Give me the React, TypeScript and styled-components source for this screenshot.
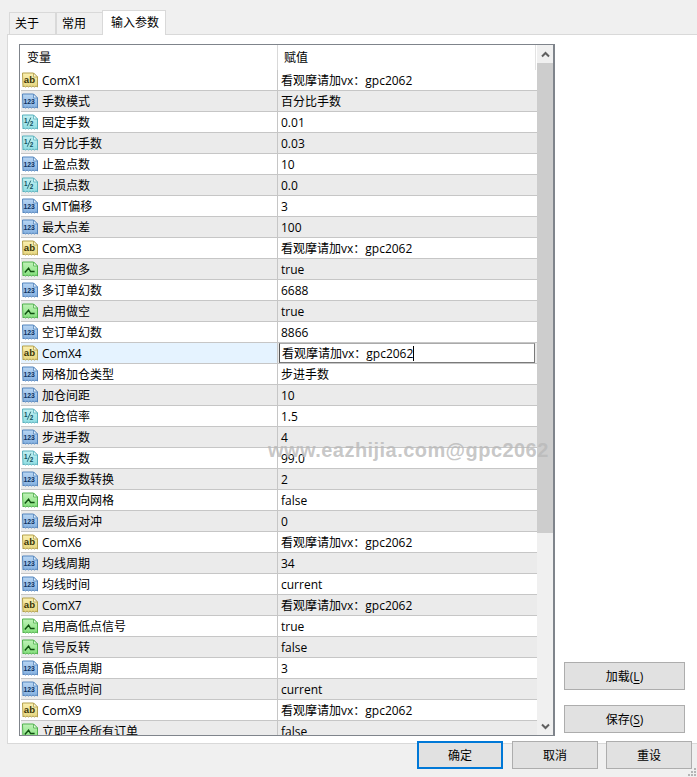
import React from "react";
import styled, { createGlobalStyle } from "styled-components";

const Global = createGlobalStyle`
  html, body { margin: 0; padding: 0; background: #f0f0f0; }
  #root { width: 697px; height: 777px; overflow: hidden; }
`;

const FONT = `"Open Sans", "Noto Sans CJK SC", sans-serif`;

const Dialog = styled.div`
  width: 697px;
  height: 777px;
  padding-top: 10px;
  box-sizing: border-box;
  display: flex;
  flex-direction: column;
  font-family: ${FONT};
  font-size: 12px;
  color: #000;
  background: #f0f0f0;
`;

const TabBar = styled.div`
  display: flex;
  align-items: flex-end;
  height: 25px;
  padding-left: 9px;
  position: relative;
  z-index: 1;
  margin-bottom: -1px;
`;

const Tab = styled.div<{ $active?: boolean; $w: number }>`
  width: ${(p) => p.$w}px;
  height: ${(p) => (p.$active ? 25 : 23)}px;
  box-sizing: border-box;
  background: ${(p) => (p.$active ? "#fff" : "#f0f0f0")};
  border: 1px solid #d9d9d9;
  border-bottom: ${(p) => (p.$active ? "none" : "1px solid #d9d9d9")};
  margin-left: ${(p) => (p.$active ? "-1px" : "0")};
  display: flex;
  align-items: center;
  padding-left: ${(p) => (p.$active ? 8 : 5)}px;
  padding-bottom: ${(p) => (p.$active ? 3 : 2)}px;
  white-space: nowrap;
`;

const Panel = styled.div`
  margin-left: 7px;
  width: 690px;
  height: 710px;
  box-sizing: border-box;
  background: #fff;
  border: 1px solid #d9d9d9;
  border-right: none;
  padding: 9px 0 0 11px;
  display: flex;
  gap: 9px;
`;

const List = styled.div`
  width: 536px;
  height: 692px;
  box-sizing: border-box;
  border: 1px solid #7f848b;
  border-right-width: 2px;
  display: flex;
  position: relative;
  overflow: hidden;
`;

const Table = styled.div`
  width: 516px;
  flex: none;
  overflow: hidden;
  padding-left: 1px;
`;

const HeaderRow = styled.div`
  display: grid;
  grid-template-columns: 256px 1fr;
  height: 25px;
  background: #fff;
  border-right: 1px solid #e3e3e3;
  margin-right: 1px;
`;

const HeaderCell = styled.div<{ $divider?: boolean }>`
  display: flex;
  align-items: center;
  padding-bottom: 2px;
  padding-left: 6px;
  border-left: ${(p) => (p.$divider ? "1px solid #d9d9d9" : "none")};
`;

const Row = styled.div<{ $alt: boolean }>`
  display: grid;
  grid-template-columns: 256px 1fr;
  height: 21px;
  box-sizing: border-box;
  border-bottom: 1px solid #c6c6c6;
  background: ${(p) => (p.$alt ? "#ebebeb" : "#fff")};
`;

const NameCell = styled.div<{ $selected?: boolean }>`
  display: flex;
  align-items: center;
  gap: 4px;
  padding-left: 1px;
  background: ${(p) => (p.$selected ? "#e5f3ff" : "transparent")};
  white-space: nowrap;
`;

const ValueCell = styled.div`
  display: flex;
  align-items: center;
  padding-left: 3px;
  border-left: 1px solid #c6c6c6;
  white-space: nowrap;
  position: relative;
`;

const Editor = styled.div`
  position: absolute;
  left: 1px;
  right: 2px;
  top: 0;
  height: 20px;
  box-sizing: border-box;
  background: #fff;
  border: 1px solid #7a7a7a;
  border-top-color: #aaa;
  border-left-color: #555;
  display: flex;
  align-items: center;
  padding-left: 2px;
`;

const Caret = styled.span`
  display: inline-block;
  width: 1px;
  height: 15px;
  background: #000;
`;

const Scrollbar = styled.div`
  flex: none;
  width: 16px;
  background: #f0f0f0;
  display: flex;
  flex-direction: column;
  align-items: stretch;
`;

const ScrollButton = styled.div<{ $h: number }>`
  height: ${(p) => p.$h}px;
  display: flex;
  align-items: center;
  justify-content: center;
  flex: none;
`;

const Thumb = styled.div`
  height: 470px;
  background: #cdcdcd;
  flex: none;
`;

const Track = styled.div`
  flex: 1;
`;

const Watermark = styled.div`
  position: absolute;
  left: 248px;
  top: 394px;
  white-space: nowrap;
  font-family: "Liberation Sans", sans-serif;
  font-weight: 700;
  font-size: 20px;
  letter-spacing: 0.45px;
  color: rgba(185, 185, 185, 0.8);
  pointer-events: none;
`;

const SideButtons = styled.div`
  display: flex;
  flex-direction: column;
  justify-content: flex-end;
  gap: 15px;
  height: 689px;
  width: 122px;
`;

const Button = styled.button<{ $w: number; $h: number; $primary?: boolean }>`
  width: ${(p) => p.$w}px;
  height: ${(p) => p.$h}px;
  box-sizing: border-box;
  background: #e1e1e1;
  border: ${(p) => (p.$primary ? "2px solid #0078d7" : "1px solid #adadad")};
  margin-right: ${(p) => (p.$primary ? 1 : 0)}px;
  font-family: ${FONT};
  font-size: 12px;
  color: #000;
  padding: 0;
  cursor: default;
  u { text-underline-offset: 2px; }
`;

const Footer = styled.div`
  display: flex;
  justify-content: flex-end;
  gap: 8px;
  padding: 0 5px 0 0;
  margin-top: -3px;
  position: relative;
`;

const Grip = styled.svg`
  position: absolute;
  right: 0;
  bottom: -8px;
`;

type Kind = "ab" | "123" | "half" | "bool";

const PAL: Record<Kind, { top: string; bottom: string; fold: string; stroke: string; text: string }> = {
  ab: { top: "#fbf0b0", bottom: "#e6d680", fold: "#fdf9dc", stroke: "#b3a04c", text: "#3a3508" },
  "123": { top: "#b9d6f3", bottom: "#84b0e0", fold: "#e2eefa", stroke: "#5485bd", text: "#0d3260" },
  half: { top: "#c2f0f2", bottom: "#8fdde2", fold: "#e4f9fa", stroke: "#58b0bc", text: "#134e5c" },
  bool: { top: "#c0f2b8", bottom: "#84e07c", fold: "#e4fae0", stroke: "#4fb04c", text: "#0f500f" },
};

const IconText = styled.text`
  font-family: "Liberation Sans", sans-serif;
  font-weight: 700;
`;

function TypeIcon({ kind }: { kind: Kind }) {
  const c = PAL[kind];
  const id = `tag-${kind}`;
  return (
    <svg width="16" height="16" viewBox="0 0 16 16" style={{ flex: "none" }}>
      <defs>
        <linearGradient id={id} x1="0" y1="0" x2="0" y2="1">
          <stop offset="0" stopColor={c.top} />
          <stop offset="1" stopColor={c.bottom} />
        </linearGradient>
      </defs>
      <path
        d="M.5 1h11l4 4v10l-1.5-1-1.5 1-1.5-1-1.5 1-1.5-1-1.5 1-1.5-1-1.5 1-1.5-1-1 1z"
        fill={`url(#${id})`}
        stroke={c.stroke}
        strokeWidth="1"
      />
      <path d="M11.5 1v4h4z" fill={c.fold} stroke={c.stroke} strokeWidth="0.8" />
      {kind === "ab" && (
        <IconText x="1.8" y="11.4" fontSize="9.6" fill={c.text}>ab</IconText>
      )}
      {kind === "123" && (
        <IconText x="1.4" y="11" fontSize="6.8" fill={c.text}>123</IconText>
      )}
      {kind === "half" && (
        <>
          <IconText x="2" y="8.8" fontSize="6.4" fill={c.text}>1</IconText>
          <path d="M8.8 3.6 5.2 11.8" stroke={c.text} strokeWidth="0.8" />
          <IconText x="7.8" y="11.8" fontSize="6.4" fill={c.text}>2</IconText>
        </>
      )}
      {kind === "bool" && (
        <path d="M2.8 11.5 6.6 7.2 8.6 10.5h4" fill="none" stroke={c.text} strokeWidth="1.4" />
      )}
    </svg>
  );
}

const V = "看观摩请加vx：gpc2062";

const ROWS: [Kind, string, string][] = [
  ["ab", "ComX1", V],
  ["123", "手数模式", "百分比手数"],
  ["half", "固定手数", "0.01"],
  ["half", "百分比手数", "0.03"],
  ["123", "止盈点数", "10"],
  ["half", "止损点数", "0.0"],
  ["123", "GMT偏移", "3"],
  ["123", "最大点差", "100"],
  ["ab", "ComX3", V],
  ["bool", "启用做多", "true"],
  ["123", "多订单幻数", "6688"],
  ["bool", "启用做空", "true"],
  ["123", "空订单幻数", "8866"],
  ["ab", "ComX4", V],
  ["123", "网格加仓类型", "步进手数"],
  ["123", "加仓间距", "10"],
  ["half", "加仓倍率", "1.5"],
  ["123", "步进手数", "4"],
  ["half", "最大手数", "99.0"],
  ["123", "层级手数转换", "2"],
  ["bool", "启用双向网格", "false"],
  ["123", "层级后对冲", "0"],
  ["ab", "ComX6", V],
  ["123", "均线周期", "34"],
  ["123", "均线时间", "current"],
  ["ab", "ComX7", V],
  ["bool", "启用高低点信号", "true"],
  ["bool", "信号反转", "false"],
  ["123", "高低点周期", "3"],
  ["123", "高低点时间", "current"],
  ["ab", "ComX9", V],
  ["bool", "立即平仓所有订单", "false"],
];

const Chevron = ({ up }: { up?: boolean }) => (
  <svg width="9" height="7" viewBox="0 0 9 7">
    <path
      d={up ? "M1 5.5 4.5 2 8 5.5" : "M1 1.5 4.5 5 8 1.5"}
      fill="none"
      stroke="#606060"
      strokeWidth="2"
    />
  </svg>
);

export default function App() {
  return (
    <>
      <Global />
      <Dialog>
        <TabBar>
          <Tab $w={47}>关于</Tab>
          <Tab $w={47}>常用</Tab>
          <Tab $w={64} $active>输入参数</Tab>
        </TabBar>
        <Panel>
          <List>
            <Table>
              <HeaderRow>
                <HeaderCell>变量</HeaderCell>
                <HeaderCell $divider>赋值</HeaderCell>
              </HeaderRow>
              {ROWS.map(([kind, name, value], i) => {
                const selected = name === "ComX4";
                return (
                  <Row key={name} $alt={i % 2 === 1}>
                    <NameCell $selected={selected}>
                      <TypeIcon kind={kind} />
                      {name}
                    </NameCell>
                    <ValueCell>
                      {selected ? (
                        <Editor>
                          {value}
                          <Caret />
                        </Editor>
                      ) : (
                        value
                      )}
                    </ValueCell>
                  </Row>
                );
              })}
            </Table>
            <Scrollbar>
              <ScrollButton $h={18}><Chevron up /></ScrollButton>
              <Thumb />
              <Track />
              <ScrollButton $h={17}><Chevron /></ScrollButton>
            </Scrollbar>
            <Watermark>www.eazhijia.com@gpc2062</Watermark>
          </List>
          <SideButtons>
            <Button $w={121} $h={28}>加载(<u>L</u>)</Button>
            <Button $w={121} $h={28}>保存(<u>S</u>)</Button>
          </SideButtons>
        </Panel>
        <Footer>
          <Button $w={86} $h={28} $primary>确定</Button>
          <Button $w={86} $h={28}>取消</Button>
          <Button $w={86} $h={28}>重设</Button>
          <Grip width="9" height="9" viewBox="0 0 9 9">
            <g fill="#b5b5b5">
              <rect x="6" y="0" width="2" height="2" />
              <rect x="3" y="3" width="2" height="2" />
              <rect x="6" y="3" width="2" height="2" />
              <rect x="0" y="6" width="2" height="2" />
              <rect x="3" y="6" width="2" height="2" />
              <rect x="6" y="6" width="2" height="2" />
            </g>
          </Grip>
        </Footer>
      </Dialog>
    </>
  );
}
